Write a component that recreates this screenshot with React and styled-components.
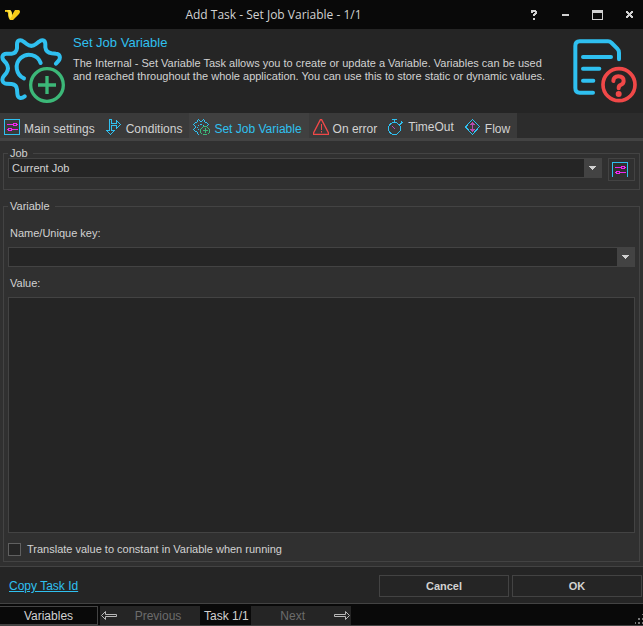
import React from "react";
import styled, { createGlobalStyle } from "styled-components";

const c = {
  black: "#090909",
  dark: "#252525",
  panel: "#303030",
  tab: "#3a3a3a",
  raised: "#404040",
  line: "#434343",
  text: "#d2d2d2",
  dim: "#6c6c6c",
  blue: "#2fc0f0",
  magenta: "#f026f0",
  green: "#3cb878",
  red: "#f04848",
};

const Global = createGlobalStyle`
  * { box-sizing: border-box; }
  body {
    margin: 0;
    background: ${c.dark};
    color: ${c.text};
    font: 11px/14px "Liberation Sans", Arial, sans-serif;
  }
  button, select, input, textarea { font: inherit; color: inherit; border-radius: 0; margin: 0; }
`;

const Window = styled.div`
  display: flex;
  flex-direction: column;
  height: 100vh;
`;

const TitleBar = styled.header`
  display: grid;
  grid-template-columns: 1fr auto 1fr;
  align-items: center;
  flex: none;
  height: 29px;
  padding: 0 4px;
  background: ${c.black};
`;

const WindowTitle = styled.h1`
  margin: 0;
  padding-right: 96px;
  font: 400 12px/16px "Open Sans", "Noto Sans", sans-serif;
  white-space: nowrap;
`;

const TitleSlot = styled.div`
  display: flex;
  margin-right: 96px;
`;

const WindowButtons = styled.div`
  display: flex;
  justify-content: flex-end;
  margin-left: -96px;
`;

const WindowButton = styled.button`
  display: flex;
  align-items: center;
  justify-content: center;
  width: 32px;
  height: 24px;
  padding: 0;
  border: 0;
  background: none;

  &:last-child { width: 20px; margin-left: 6px; }
`;

const Intro = styled.section`
  display: flex;
  flex: none;
  height: 84px;
  padding: 7px 6px 0 0;
  background: ${c.dark};
`;

const IntroText = styled.div`
  flex: 1;
  padding-left: 8px;
`;

const IntroTitle = styled.h2`
  margin: 0 0 7px;
  color: ${c.blue};
  font-size: 13px;
  font-weight: 400;
  line-height: 14px;
`;

const IntroCopy = styled.p`
  margin: 0;
  max-width: 484px;
  line-height: 13px;
`;

const TabStrip = styled.div`
  display: flex;
  flex: none;
  height: 28px;
  background: #2c2c2c;
  border-bottom: 3px solid ${c.line};
`;

const Tab = styled.button`
  display: flex;
  align-items: flex-start;
  gap: 4px;
  padding: 6px 7px 0 4px;
  border: 0;
  background: ${(p) => (p.$active ? c.raised : c.tab)};
  color: ${(p) => (p.$active ? c.blue : c.text)};
  font-size: 12px;
  line-height: 15px;
  white-space: nowrap;

  svg { flex: none; }
`;

const TabLabel = styled.span`
  padding-top: ${(p) => (p.$raised ? 1 : 3)}px;
`;

const Content = styled.main`
  display: flex;
  flex-direction: column;
  flex: 1;
  gap: 11px;
  padding: 7px 3px 4px;
  background: ${c.panel};
  border-bottom: 1px solid ${c.line};
`;

const Group = styled.fieldset`
  display: flex;
  flex-direction: ${(p) => (p.$column ? "column" : "row")};
  flex: ${(p) => (p.$column ? "1" : "none")};
  min-width: 0;
  margin: 0;
  padding: 0 4px ${(p) => (p.$column ? 5 : 8)}px;
  border: 1px solid ${c.line};
`;

const Legend = styled.legend`
  padding: 0 5px 0 2px;
  line-height: 10px;
`;

const Combo = styled.div`
  display: flex;
  flex: ${(p) => (p.$grow ? "1" : "none")};
  position: relative;
  height: 20px;
  background: ${c.dark};
  border: 1px solid ${c.line};
`;

const ComboSelect = styled.select`
  flex: 1;
  min-width: 0;
  padding: 0 20px 1px 3px;
  appearance: none;
  border: 0;
  outline: 0;
  background: none;
`;

const ComboArrow = styled.span`
  position: absolute;
  inset: 0 0 0 auto;
  display: flex;
  align-items: center;
  justify-content: center;
  width: 17px;
  background: ${c.line};
  pointer-events: none;
`;

const SettingsButton = styled.button`
  display: flex;
  align-items: center;
  justify-content: center;
  width: 27px;
  height: 23px;
  margin-left: 6px;
  padding: 0 3px 0 0;
  border: 1px solid ${c.line};
  background: none;
`;

const FieldLabel = styled.label`
  padding: ${(p) => (p.$first ? 15 : 9)}px 2px 7px;
`;

const ValueBox = styled.textarea`
  flex: 1;
  min-height: 80px;
  padding: 3px;
  border: 1px solid ${c.line};
  outline: 0;
  background: ${c.dark};
  resize: none;
`;

const CheckRow = styled.label`
  display: flex;
  align-items: center;
  gap: 6px;
  padding-top: 9px;
`;

const CheckBox = styled.input`
  appearance: none;
  width: 13px;
  height: 13px;
  border: 1px solid #606060;
  background: ${c.dark};

  &:checked { background: ${c.blue}; }
`;

const Actions = styled.footer`
  display: flex;
  align-items: center;
  flex: none;
  gap: 3px;
  height: 36px;
  padding: 2px 1px 0 9px;
  background: ${c.dark};
`;

const CopyLink = styled.a`
  margin-right: auto;
  color: ${c.blue};
  font-size: 12px;
  text-decoration: underline;
`;

const ActionButton = styled.button`
  width: 130px;
  height: 22px;
  padding: 0;
  border: 1px solid ${c.line};
  background: none;
  font-weight: 700;
`;

const StatusBar = styled.nav`
  display: flex;
  align-items: center;
  flex: none;
  height: 23px;
  border-top: 1px solid ${c.line};
  border-bottom: 1px solid ${c.line};
  background: ${c.black};
  font-size: 12px;
`;

const VariablesButton = styled.button`
  width: 98px;
  height: 19px;
  margin: 2px 2px 0 0;
  padding: 0;
  border: 1px solid ${c.line};
  border-left: 0;
  background: none;
`;

const StepButton = styled.button`
  display: grid;
  grid-template-columns: ${(p) => (p.$next ? "1fr 16px" : "16px 1fr")};
  align-items: center;
  width: 100px;
  height: 19px;
  margin-top: 2px;
  padding: 0 1px;
  border: 0;
  background: ${c.dark};

  &:disabled { color: ${c.dim}; }
`;

const StepCount = styled.span`
  padding: 2px 2px 0 4px;
`;

const Grip = styled.svg`
  align-self: flex-end;
  margin-left: auto;
`;

function Logo() {
  return (
    <svg width="17" height="12" viewBox="0 0 17 12" aria-hidden="true">
      <path d="M1 1h5q2 1 2 5l3-5h4q2 1 0 4L9 11H6Q4 9 4 4 3 2 1 3z" fill="#f6cc18" />
      <path d="M3 1h3q2 1 2 6L6 10Q4 7 5 3z" fill="#ffe750" />
    </svg>
  );
}

function GearAddIcon() {
  return (
    <svg width="65" height="68" viewBox="0 108 195 204" fill="none" strokeLinecap="round" aria-hidden="true">
      <g stroke={c.blue} strokeWidth="12">
        <path d="M168 191L176 182C183 173 179 161 168 161L155 160Q138 158 136 142V133C136 120 126 117 117 125L108 132Q94 143 80 132L71 125C62 117 51 120 51 133V145Q49 160 35 161L19 161C7 161 4 173 11 181L19 190Q29 205 19 219L11 229C4 238 7 250 19 251L35 252Q50 254 51 268L52 281C53 296 64 297 74 289" />
        <path d="M122 189A37 37 0 1 0 72 235" />
      </g>
      <g stroke={c.green} strokeWidth="10">
        <circle cx="141" cy="255" r="49" />
        <path d="M114 255h54M141 228v54" strokeLinecap="butt" />
      </g>
    </svg>
  );
}

function DocumentHelpIcon() {
  return (
    <svg width="66" height="68" viewBox="429 108 198 204" fill="none" strokeLinecap="round" aria-hidden="true">
      <g stroke={c.blue} strokeWidth="12">
        <path d="M495 278H455Q442 278 442 264V138Q442 124 455 124H540Q546 124 551 129L568 146Q573 151 573 158V178" />
        <path d="M465 171h84M465 206h49M465 242h31" />
      </g>
      <g stroke={c.red}>
        <circle cx="573" cy="254" r="48" strokeWidth="11" />
        <path d="M556 243Q557 229 571 229Q587 229 587 243Q587 251 578 255Q572 257 572 265" strokeWidth="12" />
        <circle cx="572" cy="282" r="9" fill={c.red} stroke="none" />
      </g>
    </svg>
  );
}

function SettingsIcon({ open }) {
  return (
    <svg width="16" height="16" viewBox="0 0 16 16" fill="none" shapeRendering="crispEdges" aria-hidden="true">
      {open ? (
        <path d="M.5 15V.5h15V15" stroke={c.blue} />
      ) : (
        <rect x="0.5" y="0.5" width="15" height="15" rx="1" stroke={c.blue} />
      )}
      <path d="M3 5.5h6M13 5.5h1M9.5 4.5h3v2h-3zM3 10.5h1M8 10.5h6M4.5 9.5h3v2h-3z" stroke={c.magenta} />
    </svg>
  );
}

function BranchIcon() {
  return (
    <svg width="16" height="16" viewBox="0 0 16 16" fill="none" stroke={c.blue} shapeRendering="crispEdges" aria-hidden="true">
      <path d="M3.5 11.5V.5h2V4.5h5V1.5L14.5 5.5 10.5 9.5V6.5h-5V11.5H8.5L4.5 15.5.5 11.5z" />
    </svg>
  );
}

function SmallGearIcon() {
  return (
    <svg width="17" height="17" viewBox="0 0 17 17" fill="none" shapeRendering="crispEdges" aria-hidden="true">
      <g stroke={c.blue}>
        <path d="M5 .5h1M10 .5h1M4.5 1v2M6 1.5h1M7 2.5h2M9 1.5h1M11.5 1v2M2 3.5h2M12 3.5h2M1.5 4v1M14.5 4v1M.5 5v1M15.5 5v1M1 6.5h1M14 6.5h1M2.5 7v2M1 9.5h1M.5 10v1M1 11.5h1M2 12.5h2M4.5 13v2M5 15.5h1" />
        <path d="M7 5.5h2M5 6.5h1M10 6.5h1M4.5 8v1M5 10.5h1" />
      </g>
      <g stroke={c.green}>
        <path d="M10 7.5h4M10 15.5h4M8.5 9v1M7.5 10v4M8.5 14v1M15.5 9v1M16.5 10v4M15.5 14v1M9 8.5h1M14 8.5h1" />
        <path d="M10 11.5h5M12.5 9v5" />
      </g>
    </svg>
  );
}

function WarningIcon() {
  return (
    <svg width="16" height="16" viewBox="0 0 16 16" fill="none" stroke={c.red} aria-hidden="true">
      <path d="M7.5.5h1L15.5 14v1.5H.5V14z" strokeWidth="1.4" />
      <path d="M8.5 5v6M8.5 12v1.5" />
    </svg>
  );
}

function TimerIcon() {
  return (
    <svg width="16" height="16" viewBox="0 0 16 16" fill="none" stroke={c.blue} shapeRendering="crispEdges" aria-hidden="true">
      <circle cx="6.5" cy="9.5" r="6" />
      <path d="M4 .5h5M6.5 1v2.5M13 2l2.5 2.5M14 3.5l-2 2" />
      <path d="M4 7l3 3" stroke="#b94bb0" />
    </svg>
  );
}

function FlowIcon() {
  return (
    <svg width="16" height="16" viewBox="0 0 16 16" fill="none" shapeRendering="crispEdges" aria-hidden="true">
      <path d="M7.5.5L14.5 7.5 7.5 15.5.5 8z" stroke={c.blue} />
      <path d="M7.5 4v8M5.5 6l2-2 2 2M5.5 10l2 2 2-2" stroke="#b94bb0" />
    </svg>
  );
}

function DownTriangle() {
  return (
    <svg width="7" height="4" viewBox="0 0 7 4" shapeRendering="crispEdges" aria-hidden="true">
      <path d="M0 0h7v1H6v1H5v1H4v1H3V3H2V2H1V1H0z" fill="#d0d0d0" />
    </svg>
  );
}

function StepArrow({ next }) {
  return (
    <svg width="16" height="9" viewBox="0 0 16 9" fill="none" stroke="#b8b8b8" aria-hidden="true">
      {next ? (
        <path d="M.5 3.5h11V.5L15.5 4.5 11.5 8.5V5.5H.5z" />
      ) : (
        <path d="M15.5 3.5h-11V.5L.5 4.5 4.5 8.5V5.5h11z" />
      )}
    </svg>
  );
}

const glyphs = {
  Help: "M1 0h5v1h1v3H6v1H5v1H3V4h1V3h1V2H3v1H1zM3 8h2v2H3z",
  Minimize: "M0 4h7v2H0z",
  Maximize: "M0 0h11v10H0zM1 3v6h9V3z",
  Close: "M0 1h2v1h1v1h1V2h1V1h2v2H6v1H5v1h1v1h1v2H5V7H4V6H3v1H2v1H0V6h1V5h1V4H1V3H0z",
};

function WindowGlyph({ name }) {
  const width = name === "Maximize" ? 11 : 7;
  return (
    <svg width={width} height="10" viewBox={`0 0 ${width} 10`} shapeRendering="crispEdges" aria-hidden="true">
      <path d={glyphs[name]} fill="#d0d0d0" fillRule="evenodd" />
    </svg>
  );
}

const tabs = [
  { label: "Main settings", Icon: SettingsIcon },
  { label: "Conditions", Icon: BranchIcon },
  { label: "Set Job Variable", Icon: SmallGearIcon },
  { label: "On error", Icon: WarningIcon },
  { label: "TimeOut", Icon: TimerIcon, raised: true },
  { label: "Flow", Icon: FlowIcon },
];

export default function App() {
  const [active, setActive] = React.useState("Set Job Variable");
  return (
    <Window>
      <Global />
      <TitleBar>
        <TitleSlot><Logo /></TitleSlot>
        <WindowTitle>Add Task - Set Job Variable - 1/1</WindowTitle>
        <WindowButtons>
          {Object.keys(glyphs).map((name) => (
            <WindowButton key={name} aria-label={name}><WindowGlyph name={name} /></WindowButton>
          ))}
        </WindowButtons>
      </TitleBar>

      <Intro>
        <GearAddIcon />
        <IntroText>
          <IntroTitle>Set Job Variable</IntroTitle>
          <IntroCopy>
            The Internal - Set Variable Task allows you to create or update a Variable. Variables can be used
            and reached throughout the whole application. You can use this to store static or dynamic values.
          </IntroCopy>
        </IntroText>
        <DocumentHelpIcon />
      </Intro>

      <TabStrip role="tablist">
        {tabs.map(({ label, Icon, raised }) => (
          <Tab key={label} role="tab" aria-selected={active === label} $active={active === label} onClick={() => setActive(label)}>
            <Icon />
            <TabLabel $raised={raised}>{label}</TabLabel>
          </Tab>
        ))}
      </TabStrip>

      <Content>
        <Group>
          <Legend>Job</Legend>
          <Combo $grow>
            <ComboSelect aria-label="Job">
              <option>Current Job</option>
            </ComboSelect>
            <ComboArrow><DownTriangle /></ComboArrow>
          </Combo>
          <SettingsButton aria-label="Job settings"><SettingsIcon open /></SettingsButton>
        </Group>

        <Group $column>
          <Legend>Variable</Legend>
          <FieldLabel htmlFor="variable-key" $first>Name/Unique key:</FieldLabel>
          <Combo>
            <ComboSelect id="variable-key">
              <option />
            </ComboSelect>
            <ComboArrow><DownTriangle /></ComboArrow>
          </Combo>
          <FieldLabel htmlFor="variable-value">Value:</FieldLabel>
          <ValueBox id="variable-value" />
          <CheckRow>
            <CheckBox type="checkbox" />
            Translate value to constant in Variable when running
          </CheckRow>
        </Group>
      </Content>

      <Actions>
        <CopyLink href="#copy-task-id">Copy Task Id</CopyLink>
        <ActionButton>Cancel</ActionButton>
        <ActionButton>OK</ActionButton>
      </Actions>

      <StatusBar>
        <VariablesButton>Variables</VariablesButton>
        <StepButton disabled><StepArrow /><span>Previous</span></StepButton>
        <StepCount>Task 1/1</StepCount>
        <StepButton disabled $next><span>Next</span><StepArrow next /></StepButton>
        <Grip width="9" height="11" viewBox="0 0 9 11" fill="#777" shapeRendering="crispEdges" aria-hidden="true">
          <path d="M8 0h1v1H8zM4 4h2v2H4zM8 4h1v2H8zM1 8h1v2H1zM4 8h2v2H4zM8 8h1v2H8z" />
        </Grip>
      </StatusBar>
    </Window>
  );
}
